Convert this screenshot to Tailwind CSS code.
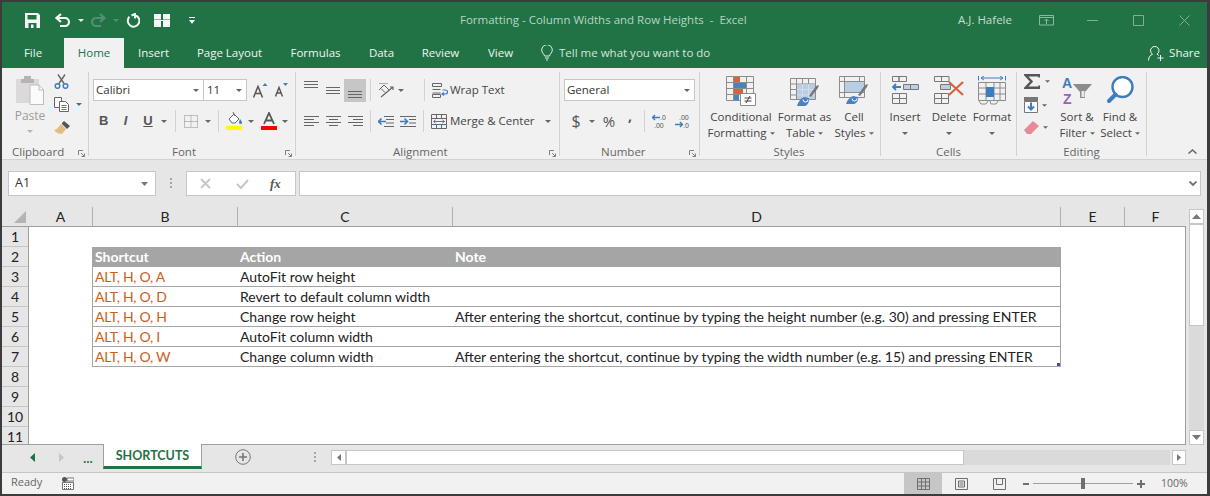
<html lang="en">
<head>
  <meta charset="utf-8"/>
  <title>Formatting - Column Widths and Row Heights - Excel</title>
  <script src="https://cdn.jsdelivr.net/npm/@tailwindcss/browser@4"></script>
</head>
<body class="bg-[#333333] overflow-hidden">
<div class="w-[1210px] h-[496px] border-l-2 border-t-2 border-r-3 border-b-2 border-[#3c3c3c] flex flex-col font-['Open_Sans',sans-serif] text-[11.5px] text-[#444444] overflow-hidden">

  <!-- Title bar -->
  <div class="h-[36px] bg-[#217346] flex items-center shrink-0">
    <div class="w-[458px] flex items-center">
      <svg class="ml-[23px]" width="15" height="15" viewBox="0 0 15 15"><path d="M0 0h13l2 2v13H0z" fill="#f4f8f5"/><path d="M2.500 2h9v4.500h-9z" fill="#217346"/><path d="M3.500 10h8v5h-8z" fill="#217346"/><path d="M6 11.500h2.500V15H6z" fill="#f4f8f5"/></svg>
      <svg class="ml-[15px]" width="15" height="14" viewBox="0 0 15 14"><path d="M6 1L1.500 5 6 9M2 5h8a3.800 3.800 0 0 1 0 8H5" fill="none" stroke="#f4f8f5" stroke-width="2.200"/></svg>
      <svg class="ml-[8px]" width="6" height="3" viewBox="0 0 6 3"><path d="M0 0h6L3 3z" fill="#e8f0eb"/></svg>
      <svg class="ml-[7px]" width="15" height="14" viewBox="0 0 15 14"><path d="M9 1l4.500 4L9 9M13 5H5a3.800 3.800 0 0 0 0 8h5" fill="none" stroke="#4f9170" stroke-width="2.200"/></svg>
      <svg class="ml-[7px]" width="6" height="3" viewBox="0 0 6 3"><path d="M0 0h6L3 3z" fill="#4f9170"/></svg>
      <svg class="ml-[7px]" width="14" height="15" viewBox="0 0 14 15"><path d="M5.500 2.500L9 1v4.500M9 2.200A5.800 5.800 0 1 1 3.400 3.800" fill="none" stroke="#f4f8f5" stroke-width="2"/></svg>
      <svg class="ml-[14px]" width="16" height="13" viewBox="0 0 16 13"><path d="M0 0h7v5.500H0zM9 0h7v5.500H9zM0 7h7v6H0zM9 7h7v6H9z" fill="#f4f8f5"/><path d="M0 6.500h16" stroke="#f4f8f5"/></svg>
      <svg class="ml-[19px]" width="6" height="7" viewBox="0 0 6 7"><path d="M0 0h6v1H0zM0 3h6L3 7z" fill="#f4f8f5"/></svg>
    </div>
    <span class="w-[498px] text-[#b7d3c3] whitespace-pre">Formatting - Column Widths and Row Heights  -  Excel</span>
    <span class="w-[81px] text-[#c6dccf]">A.J. Hafele</span>
    <svg width="15" height="11" viewBox="0 0 15 11"><path d="M.5.500h14v9.500H.500zM.5 2.500h14M7.500 9V4.500M5.500 6l2-2 2 2" fill="none" stroke="#8cb8a1"/></svg>
    <svg class="ml-[33px]" width="11" height="1" viewBox="0 0 11 1"><path d="M0 0h11v1H0z" fill="#7fb096"/></svg>
    <svg class="ml-[35px]" width="11" height="11" viewBox="0 0 11 11"><path d="M.5.500h10v10H.500z" fill="none" stroke="#7fb096"/></svg>
    <svg class="ml-[35px]" width="11" height="11" viewBox="0 0 11 11"><path d="M.5.500l10 10M10.500.500l-10 10" fill="none" stroke="#7fb096"/></svg>
  </div>

  <!-- Ribbon tabs -->
  <div class="h-[30px] bg-[#217346] flex text-[#eef5f1] shrink-0">
    <span class="w-[62px] flex items-center justify-center">File</span>
    <span class="w-[60px] flex items-center justify-center bg-[#f1f1f1] text-[#217346]">Home</span>
    <span class="w-[59px] flex items-center justify-center">Insert</span>
    <span class="w-[93px] flex items-center justify-center">Page Layout</span>
    <span class="w-[79px] flex items-center justify-center">Formulas</span>
    <span class="w-[53px] flex items-center justify-center">Data</span>
    <span class="w-[65px] flex items-center justify-center">Review</span>
    <span class="w-[55px] flex items-center justify-center">View</span>
    <span class="ml-[13px] flex items-center">
      <svg width="12" height="16" viewBox="0 0 12 16"><path d="M3.500 11C3 8.500.7 7.800.7 5a5.300 5.300 0 0 1 10.600 0c0 2.800-2.300 3.500-2.800 6zM4 13h4M5 15h2" fill="none" stroke="#e3eee8"/></svg>
      <span class="ml-[6px] text-[#d5e5dc]">Tell me what you want to do</span>
    </span>
    <span class="ml-auto mr-[7px] flex items-center">
      <svg width="16" height="16" viewBox="0 0 16 16"><path d="M.5 15.500c0-3.500 2-5.500 4-6.300a4.200 4.200 0 1 1 4.500 0c.7.300 1.300.7 1.800 1.200M9.500 13h6M12.500 10v6" fill="none" stroke="#f4f8f5"/></svg>
      <span class="ml-[5px]">Share</span>
    </span>
  </div>

  <!-- Ribbon -->
  <div class="h-[92px] bg-[#f1f1f1] border-b border-[#d2d2d2] flex pt-[4px] shrink-0">

    <!-- Clipboard -->
    <div class="w-[87px] h-[84px] border-r border-[#d2d2d2] flex flex-col">
      <div class="h-[74px] shrink-0 flex">
        <div class="ml-[9px] w-[38px] flex flex-col items-center pt-[4px] text-[#9c9c9c]">
          <svg width="28" height="29" viewBox="0 0 28 29"><path d="M0 3h23v24H0z" fill="#dbd9da"/><path d="M8 0h7v3h3v4H5V3h3z" fill="#b5b3b4"/><path d="M14 9h9l4.500 4.500V28.500H14z" fill="#fbfbfb" stroke="#bdbdbd"/><path d="M23 9v5h4.500" fill="none" stroke="#bdbdbd"/></svg>
          <span class="mt-[3px] h-[16px] leading-[16px] text-[12px]">Paste</span>
          <svg class="mt-[6px]" width="6" height="3" viewBox="0 0 6 3"><path d="M0 0h6L3 3z" fill="#b4b4b4"/></svg>
        </div>
        <div class="ml-[5px] flex flex-col pt-[2px]">
          <svg width="15" height="15" viewBox="0 0 15 15"><path d="M4 .5l6 9M11 .5l-6 9" stroke="#666666" stroke-width="1.400" fill="none"/><circle cx="3.500" cy="12" r="2.300" fill="none" stroke="#3f7cbf" stroke-width="1.500"/><circle cx="11.500" cy="12" r="2.300" fill="none" stroke="#3f7cbf" stroke-width="1.500"/></svg>
          <div class="mt-[8px] flex items-center">
            <svg width="16" height="15" viewBox="0 0 16 15"><path d="M.5.500h7v10h-7z" fill="#fff" stroke="#666666"/><path d="M5.500 4.500h6l3 3v7h-9z" fill="#fff" stroke="#666666"/><path d="M7.500 8.500h5M7.500 10.500h5M7.500 12.500h5" stroke="#3f7cbf"/></svg>
            <svg class="ml-[6px]" width="6" height="3" viewBox="0 0 6 3"><path d="M0 0h6L3 3z" fill="#666666"/></svg>
          </div>
          <svg class="mt-[9px]" width="16" height="14" viewBox="0 0 16 14"><path d="M7 3l5 5-4 5C6 13 2 12 0 9c2 0 4-2 7-6z" fill="#e2bd80"/><path d="M8 2l2-2 6 5-2 2-1 1-5-5z" fill="#555555"/></svg>
        </div>
      </div>
      <div class="h-[12px] shrink-0 leading-[12px] flex text-[#666666]"><span class="ml-[10px]">Clipboard</span><svg class="ml-auto mr-[3px] mt-[4px]" width="7" height="7" viewBox="0 0 7 7"><path d="M.5 5V.5H5M3 3l3.500 3.500M6.500 3.500v3h-3" fill="none" stroke="#808080"/></svg></div>
    </div>

    <!-- Font -->
    <div class="w-[207px] h-[84px] border-r border-[#d2d2d2] flex flex-col">
      <div class="h-[74px] shrink-0 pt-[7px]">
        <div class="h-[22px] flex items-center pl-[4px]">
          <div class="w-[111px] h-[22px] bg-white border border-[#c6c6c6] flex items-center pl-[2px] pr-[4px] text-[#333333]">Calibri<svg class="ml-auto" width="6" height="3" viewBox="0 0 6 3"><path d="M0 0h6L3 3z" fill="#666666"/></svg></div>
          <div class="w-[43px] h-[22px] bg-white border border-[#c6c6c6] border-l-0 flex items-center pl-[3px] pr-[4px] text-[#333333]">11<svg class="ml-auto" width="6" height="3" viewBox="0 0 6 3"><path d="M0 0h6L3 3z" fill="#666666"/></svg></div>
          <svg class="ml-[6px]" width="15" height="15" viewBox="0 0 15 15"><path d="M.5 14.500L5 3.500l4.500 11M2.500 10.500h5" fill="none" stroke="#555555" stroke-width="1.500"/><path d="M9.500 3l2.500-3 2.500 3z" fill="#3f7cbf"/></svg>
          <svg class="ml-[7px]" width="13" height="14" viewBox="0 0 13 14"><path d="M.5 13.500L4 4.500l3.500 9M2 10h4" fill="none" stroke="#555555" stroke-width="1.400"/><path d="M8 0h5l-2.500 3z" fill="#3f7cbf"/></svg>
        </div>
        <div class="h-[22px] mt-[9px] flex items-center pl-[10px] text-[#555555]">
          <span class="w-[9px] text-[13px] font-bold font-['Liberation_Sans',sans-serif] text-center">B</span>
          <span class="ml-[13px] w-[9px] text-[13px] italic font-bold font-['Liberation_Sans',sans-serif] text-center">I</span>
          <span class="ml-[13px] w-[10px] text-[13px] font-bold underline font-['Liberation_Sans',sans-serif] text-center">U</span>
          <svg class="ml-[8px]" width="6" height="3" viewBox="0 0 6 3"><path d="M0 0h6L3 3z" fill="#666666"/></svg>
          <div class="ml-[8px] w-px h-[22px] bg-[#d2d2d2]"></div>
          <svg class="ml-[8px]" width="14" height="13" viewBox="0 0 14 13"><path d="M.5.500h13v12H.500zM7 .5v12M.5 6.500h13" fill="none" stroke="#8a8a8a" stroke-dasharray="1 1"/></svg>
          <svg class="ml-[7px]" width="6" height="3" viewBox="0 0 6 3"><path d="M0 0h6L3 3z" fill="#666666"/></svg>
          <div class="ml-[7px] w-px h-[22px] bg-[#d2d2d2]"></div>
          <svg class="ml-[7px]" width="17" height="18" viewBox="0 0 17 18"><path d="M3 7l5-5 5 5-4 4H6z" fill="#fff" stroke="#666666"/><path d="M7 0l2 4" stroke="#666666"/><path d="M14 7c1 1.500 2 2.500 2 3.500a1.500 1.500 0 0 1-3 0c0-1 .5-2 1-3.500z" fill="#3f7cbf"/><path d="M0 14h16v4H0z" fill="#ffff00"/></svg>
          <svg class="ml-[5px]" width="6" height="3" viewBox="0 0 6 3"><path d="M0 0h6L3 3z" fill="#666666"/></svg>
          <svg class="ml-[7px]" width="16" height="18" viewBox="0 0 16 18"><path d="M3 12L8 1l5 11M5 8.500h6" fill="none" stroke="#555555" stroke-width="1.800"/><path d="M0 14h16v4H0z" fill="#ff0000"/></svg>
          <svg class="ml-[5px]" width="6" height="3" viewBox="0 0 6 3"><path d="M0 0h6L3 3z" fill="#666666"/></svg>
        </div>
      </div>
      <div class="h-[12px] shrink-0 leading-[12px] flex text-[#666666]"><span class="ml-[83px]">Font</span><svg class="ml-auto mr-[3px] mt-[4px]" width="7" height="7" viewBox="0 0 7 7"><path d="M.5 5V.5H5M3 3l3.500 3.500M6.500 3.500v3h-3" fill="none" stroke="#808080"/></svg></div>
    </div>

    <!-- Alignment -->
    <div class="w-[264px] h-[84px] border-r border-[#d2d2d2] flex flex-col">
      <div class="h-[74px] shrink-0 pt-[7px]">
        <div class="h-[22px] flex items-center pl-[8px]">
          <svg class="self-start mt-[2px]" width="14" height="8" viewBox="0 0 14 8"><path d="M0 .5h14M0 3.500h14M0 6.500h14" stroke="#666666"/></svg>
          <svg class="ml-[8px] mt-[2px]" width="14" height="8" viewBox="0 0 14 8"><path d="M0 .5h14M0 3.500h14M0 6.500h14" stroke="#666666"/></svg>
          <div class="ml-[4px] w-[22px] h-[23px] bg-[#c6c6c6] flex items-end justify-center pb-[3px]"><svg width="14" height="8" viewBox="0 0 14 8"><path d="M0 .5h14M0 3.500h14M0 6.500h14" stroke="#666666"/></svg></div>
          <div class="ml-[4px] w-px h-[22px] bg-[#d2d2d2]"></div>
          <svg class="ml-[7px]" width="16" height="15" viewBox="0 0 16 15"><path d="M1 7l5-5 5 5M3 5.500l4 4M10 0l-9 0" fill="none" stroke="#666666"/><path d="M3 14L15 4M12 4h3v3" fill="none" stroke="#666666" stroke-width="1.200"/></svg>
          <svg class="ml-[4px]" width="6" height="3" viewBox="0 0 6 3"><path d="M0 0h6L3 3z" fill="#666666"/></svg>
          <div class="ml-[20px] w-px h-[22px] bg-[#d2d2d2]"></div>
          <svg class="ml-[7px]" width="16" height="15" viewBox="0 0 16 15"><path d="M.5.500h9v3h-9zM.5 6.500h8M.5 10h8M.5 11.500h8v3h-8z" fill="none" stroke="#666666"/><path d="M10.500 7h3a2 2 0 0 1 0 4h-3M12 9.500L10 11l2 1.500" fill="none" stroke="#3f7cbf" stroke-width="1.200"/></svg>
          <span class="ml-[2px] text-[#444444]">Wrap Text</span>
        </div>
        <div class="h-[22px] mt-[9px] flex items-center pl-[8px]">
          <svg width="15" height="10" viewBox="0 0 15 10"><path d="M0 .5h15M0 3.500h10M0 6.500h15M0 9.500h10" stroke="#666666"/></svg>
          <svg class="ml-[7px]" width="15" height="10" viewBox="0 0 15 10"><path d="M0 .5h15M3 3.500h9M0 6.500h15M3 9.500h9" stroke="#666666"/></svg>
          <svg class="ml-[7px]" width="15" height="10" viewBox="0 0 15 10"><path d="M0 .5h15M5 3.500h10M0 6.500h15M5 9.500h10" stroke="#666666"/></svg>
          <div class="ml-[7px] w-px h-[22px] bg-[#d2d2d2]"></div>
          <svg class="ml-[7px]" width="16" height="11" viewBox="0 0 16 11"><path d="M6 .5h10M6 10.500h10M8 3.500h8M8 7h8" stroke="#666666"/><path d="M8 5.500H1M3.500 2.500l-3 3 3 3" fill="none" stroke="#3f7cbf" stroke-width="1.600"/></svg>
          <svg class="ml-[6px]" width="16" height="11" viewBox="0 0 16 11"><path d="M0 .5h16M9 3.500h7M9 7h7M0 10.500h16" stroke="#666666"/><path d="M0 5.500h7M4.500 2.500l3 3-3 3" fill="none" stroke="#3f7cbf" stroke-width="1.600"/></svg>
          <div class="ml-[7px] w-px h-[22px] bg-[#d2d2d2]"></div>
          <svg class="ml-[7px]" width="16" height="15" viewBox="0 0 16 15"><path d="M.5.500h15v14H.500zM.5 4.500h15M.5 10.500h15M5.500.5v4M10.500.5v4M5.500 10.500v4M10.500 10.500v4" fill="none" stroke="#666666"/><path d="M2.500 7.500h11M4.500 6l-2 1.500 2 1.500M11.500 6l2 1.500-2 1.500" fill="none" stroke="#3f7cbf"/></svg>
          <span class="ml-[3px]">Merge &amp; Center</span>
          <svg class="ml-[10px]" width="6" height="3" viewBox="0 0 6 3"><path d="M0 0h6L3 3z" fill="#666666"/></svg>
        </div>
      </div>
      <div class="h-[12px] shrink-0 leading-[12px] flex text-[#666666]"><span class="ml-[97px]">Alignment</span><svg class="ml-auto mr-[3px] mt-[4px]" width="7" height="7" viewBox="0 0 7 7"><path d="M.5 5V.5H5M3 3l3.500 3.500M6.500 3.500v3h-3" fill="none" stroke="#808080"/></svg></div>
    </div>

    <!-- Number -->
    <div class="w-[140px] h-[84px] border-r border-[#d2d2d2] flex flex-col">
      <div class="h-[74px] shrink-0 pt-[7px]">
        <div class="h-[22px] flex items-center pl-[4px]">
          <div class="w-[131px] h-[22px] bg-white border border-[#c6c6c6] flex items-center pl-[2px] pr-[4px] text-[#333333]">General<svg class="ml-auto" width="6" height="3" viewBox="0 0 6 3"><path d="M0 0h6L3 3z" fill="#666666"/></svg></div>
        </div>
        <div class="h-[22px] mt-[9px] flex items-center pl-[11px] text-[#555555]">
          <span class="w-[10px] text-[16px] text-center">$</span>
          <svg class="ml-[8px]" width="6" height="3" viewBox="0 0 6 3"><path d="M0 0h6L3 3z" fill="#666666"/></svg>
          <span class="ml-[7px] w-[14px] text-[15px] text-center">%</span>
          <span class="ml-[10px] w-[8px] text-[14px] font-bold text-center leading-none -mt-[10px]">,</span>
          <div class="ml-[10px] w-px h-[22px] bg-[#d2d2d2]"></div>
          <svg class="ml-[7px]" width="15" height="14" viewBox="0 0 15 14"><path d="M8 3.500H.5M3 1L.5 3.500 3 6" fill="none" stroke="#3f7cbf" stroke-width="1.400"/><text x="8" y="6" font-size="7" fill="#555555" font-family="Liberation Sans">.0</text><text x="2" y="13.500" font-size="7" fill="#555555" font-family="Liberation Sans">.00</text></svg>
          <svg class="ml-[8px]" width="15" height="14" viewBox="0 0 15 14"><text x="4" y="6" font-size="7" fill="#555555" font-family="Liberation Sans">.00</text><path d="M0 10.500h7.500M5 8l2.500 2.500L5 13" fill="none" stroke="#3f7cbf" stroke-width="1.400"/><text x="8" y="13.500" font-size="7" fill="#555555" font-family="Liberation Sans">.0</text></svg>
        </div>
      </div>
      <div class="h-[12px] shrink-0 leading-[12px] flex text-[#666666]"><span class="ml-[41px]">Number</span><svg class="ml-auto mr-[3px] mt-[4px]" width="7" height="7" viewBox="0 0 7 7"><path d="M.5 5V.5H5M3 3l3.500 3.500M6.500 3.500v3h-3" fill="none" stroke="#808080"/></svg></div>
    </div>

    <!-- Styles -->
    <div class="w-[181px] h-[84px] border-r border-[#d2d2d2] flex flex-col">
      <div class="h-[74px] shrink-0 flex pt-[4px] leading-[16px] text-center">
        <div class="ml-[5px] w-[72px] flex flex-col items-center">
          <svg width="30" height="30" viewBox="0 0 30 30"><path d="M.5.500h27v24H.500zM.5 6.500h27M.5 12.500h27M.5 18.500h27M7.500.5v24M20.500.5v24" fill="none" stroke="#8c8c8c"/><path d="M8 1h6v5H8zM8 13h9v5H8z" fill="#d8623d"/><path d="M8 7h12v5H8zM8 19h5v5H8z" fill="#4a82bd"/><path d="M14.500 17.500h15v12h-15z" fill="#fff" stroke="#8c8c8c"/><path d="M18.500 22h7M18.500 25h7M24 20l-4 7" stroke="#444444" fill="none"/></svg>
          <span class="mt-[3px] whitespace-nowrap">Conditional</span>
          <span class="whitespace-nowrap flex items-center">Formatting<svg class="ml-[3px]" width="5" height="3" viewBox="0 0 6 3"><path d="M0 0h6L3 3z" fill="#666666"/></svg></span>
        </div>
        <div class="w-[55px] flex flex-col items-center">
          <svg width="30" height="30" viewBox="0 0 30 30"><path d="M.5 2.500h25v21H.500zM.5 8h25M.5 13.500h25M.5 19h25M6.500 2.500v21M12.500 2.500v21M18.500 2.500v21" fill="none" stroke="#8c8c8c"/><path d="M7 8.500h18V23H7z" fill="#b9cde4"/><path d="M7 13.500h18M7 19h18M12.500 8v15M18.500 8v15" stroke="#d3deeb"/><path d="M19 20l7-10 3-1-1 3-7 9z" fill="#777777"/><path d="M7 30c1-4 4-8 7-9l5 1c1 3-2 8-4 8z" fill="#4a82bd"/><path d="M13 23.500a2.500 2.500 0 1 0 5 0" fill="none" stroke="#fff"/></svg>
          <span class="mt-[3px] whitespace-nowrap">Format as</span>
          <span class="whitespace-nowrap flex items-center">Table<svg class="ml-[3px]" width="5" height="3" viewBox="0 0 6 3"><path d="M0 0h6L3 3z" fill="#666666"/></svg></span>
        </div>
        <div class="w-[44px] flex flex-col items-center">
          <svg width="30" height="30" viewBox="0 0 30 30"><path d="M.5.500h25v21H.500zM.5 5.500h25M.5 16.500h25M5.500.5v21M20.500.5v16" fill="none" stroke="#8c8c8c"/><path d="M6 6h19v10H6z" fill="#b9cde4"/><path d="M19 19l7-10 3-1-1 3-7 9z" fill="#777777"/><path d="M7 28c1-4 4-7 7-8l5 1c1 3-2 7-4 7z" fill="#4a82bd"/><path d="M13 22.500a2.500 2.500 0 1 0 5 0" fill="none" stroke="#fff"/></svg>
          <span class="mt-[3px]">Cell</span>
          <span class="whitespace-nowrap flex items-center">Styles<svg class="ml-[3px]" width="5" height="3" viewBox="0 0 6 3"><path d="M0 0h6L3 3z" fill="#666666"/></svg></span>
        </div>
      </div>
      <div class="h-[12px] shrink-0 leading-[12px] text-center text-[#666666] pr-[2px]">Styles</div>
    </div>

    <!-- Cells -->
    <div class="w-[136px] h-[84px] border-r border-[#d2d2d2] flex flex-col">
      <div class="h-[74px] shrink-0 flex pt-[4px] leading-[16px] text-center">
        <div class="ml-[5px] w-[38px] flex flex-col items-center">
          <svg width="27" height="30" viewBox="0 0 27 30"><path d="M.5.500h6.500v5H.500zM7 .5h7.500v5H7zM.5 17.500h14v10H.500zM7.500 17.500v10M.5 22.500h14" fill="none" stroke="#777777"/><path d="M11.500 8.500h7v5h-7zM18.500 8.500h8v5h-8z" fill="#bad0e6" stroke="#777777"/><path d="M9 11H1M4 8l-3 3 3 3" fill="none" stroke="#3f7cbf" stroke-width="1.800"/></svg>
          <span class="mt-[3px]">Insert</span>
          <svg class="mt-[7px]" width="6" height="3" viewBox="0 0 6 3"><path d="M0 0h6L3 3z" fill="#666666"/></svg>
        </div>
        <div class="ml-[5px] w-[40px] flex flex-col items-center">
          <svg width="31" height="30" viewBox="0 0 31 30"><path d="M.5.500h7v5h-7zM7.500.5h7.500v5H7.500zM.5 17.500h14v10H.500zM7.500 17.500v10M.5 22.500h14" fill="none" stroke="#777777"/><path d="M6.500 8.500h10v5h-10z" fill="#bad0e6" stroke="#777777"/><path d="M15 6l14 13M29 6L15 19" stroke="#d8623d" stroke-width="2.200"/></svg>
          <span class="mt-[3px]">Delete</span>
          <svg class="mt-[7px]" width="6" height="3" viewBox="0 0 6 3"><path d="M0 0h6L3 3z" fill="#666666"/></svg>
        </div>
        <div class="ml-[1px] w-[44px] flex flex-col items-center">
          <svg width="28" height="30" viewBox="0 0 28 30"><path d="M.5-.500v5M27.500-.500v5M3 2h22M6 0L3 2l3 2M22 0l3 2-3 2" fill="none" stroke="#3f7cbf"/><path d="M.5 6.500h27v18H.500zM.5 12h27M.5 18h27M8 6.500v18M16 6.500v18M22 6.500v18" fill="none" stroke="#8c8c8c"/><path d="M8 11h8v10H8z" fill="#3f7cbf"/><path d="M1 25l2 3h5l2-3M12 25l1 3h5l2-3" fill="none" stroke="#8c8c8c"/></svg>
          <span class="mt-[3px]">Format</span>
          <svg class="mt-[7px]" width="6" height="3" viewBox="0 0 6 3"><path d="M0 0h6L3 3z" fill="#666666"/></svg>
        </div>
      </div>
      <div class="h-[12px] shrink-0 leading-[12px] text-center text-[#666666]">Cells</div>
    </div>

    <!-- Editing -->
    <div class="w-[130px] h-[84px] border-r border-[#d2d2d2] flex flex-col">
      <div class="h-[74px] shrink-0 flex">
        <div class="ml-[7px] flex flex-col pt-[2px]">
          <div class="flex items-center">
            <svg width="16" height="15" viewBox="0 0 16 15"><path d="M15.500 3.500V1.200H1.500l6 6.300-6 6.300h14v-2.300" fill="none" stroke="#555555" stroke-width="2.400"/></svg>
            <svg class="ml-[5px]" width="5" height="3" viewBox="0 0 6 3"><path d="M0 0h6L3 3z" fill="#666666"/></svg>
          </div>
          <div class="mt-[8px] flex items-center">
            <svg width="14" height="16" viewBox="0 0 14 16"><path d="M0 0h14v4H0z" fill="#777777"/><path d="M.5 4.500h13v11H.500z" fill="#fff" stroke="#777777"/><path d="M7 5.500v7M4 9.500l3 3 3-3" fill="none" stroke="#3f7cbf" stroke-width="2"/></svg>
            <svg class="ml-[4px]" width="5" height="3" viewBox="0 0 6 3"><path d="M0 0h6L3 3z" fill="#666666"/></svg>
          </div>
          <div class="mt-[8px] flex items-center">
            <svg width="15" height="13" viewBox="0 0 15 13"><path d="M0 9l9-9 6 5-8 8H3z" fill="#e8899a"/></svg>
            <svg class="ml-[4px]" width="5" height="3" viewBox="0 0 6 3"><path d="M0 0h6L3 3z" fill="#666666"/></svg>
          </div>
        </div>
        <div class="ml-[7px] w-[40px] flex flex-col items-center pt-[4px] leading-[16px] text-center">
          <svg width="30" height="30" viewBox="0 0 30 30"><text x="0" y="12" font-size="14" font-weight="bold" fill="#3f7cbf" font-family="Liberation Sans">A</text><text x="1" y="28" font-size="14" font-weight="bold" fill="#9a63b5" font-family="Liberation Sans">Z</text><path d="M11 8h19l-7 8v6h-5v-6z" fill="#8c8c8c"/><path d="M19.500 15h3v6h-3z" fill="#e8e8e8"/></svg>
          <span class="mt-[3px] whitespace-nowrap">Sort &amp;</span>
          <span class="whitespace-nowrap flex items-center">Filter<svg class="ml-[3px]" width="5" height="3" viewBox="0 0 6 3"><path d="M0 0h6L3 3z" fill="#666666"/></svg></span>
        </div>
        <div class="ml-[3px] w-[40px] flex flex-col items-center pt-[4px] leading-[16px] text-center">
          <svg width="28" height="30" viewBox="0 0 28 30"><circle cx="16.500" cy="11" r="10" fill="#fff" stroke="#3f7cbf" stroke-width="2.400"/><path d="M9.500 18.500L3 25" stroke="#3f7cbf" stroke-width="4" stroke-linecap="round"/></svg>
          <span class="mt-[3px] whitespace-nowrap">Find &amp;</span>
          <span class="whitespace-nowrap flex items-center">Select<svg class="ml-[3px]" width="5" height="3" viewBox="0 0 6 3"><path d="M0 0h6L3 3z" fill="#666666"/></svg></span>
        </div>
      </div>
      <div class="h-[12px] shrink-0 leading-[12px] text-center text-[#666666]">Editing</div>
    </div>

    <div class="flex-1 flex items-end justify-end pr-[10px] pb-[5px]">
      <svg width="9" height="5" viewBox="0 0 9 5"><path d="M.5 4.500l4-3.500 4 3.500" fill="none" stroke="#666666" stroke-width="1.500"/></svg>
    </div>
  </div>

  <!-- Formula bar -->
  <div class="h-[47px] bg-[#e6e6e6] flex items-center pl-[6px] pr-[6px] shrink-0">
    <div class="w-[148px] h-[25px] bg-white border border-[#c6c6c6] flex items-center pl-[6px] pr-[7px] text-[12.500px] text-[#333333]">A1<svg class="ml-auto" width="7" height="4" viewBox="0 0 7 4"><path d="M0 0h7L3.500 4z" fill="#777777"/></svg></div>
    <svg class="ml-[14px]" width="3" height="11" viewBox="0 0 3 11"><path d="M0 0h2v2H0zM0 4h2v2H0zM0 8h2v2H0z" fill="#a6a6a6"/></svg>
    <div class="ml-[13px] w-[110px] h-[25px] bg-white border border-[#c6c6c6] flex items-center pl-[13px]">
      <svg width="11" height="11" viewBox="0 0 11 11"><path d="M1 1l9 9M10 1l-9 9" stroke="#c6c6c6" stroke-width="1.800"/></svg>
      <svg class="ml-[25px]" width="13" height="10" viewBox="0 0 13 10"><path d="M1 5l4 4 7-8" fill="none" stroke="#c6c6c6" stroke-width="2"/></svg>
      <span class="ml-[21px] italic font-bold text-[13px] text-[#555555] font-['Liberation_Serif',serif]">fx</span>
    </div>
    <div class="ml-[3px] flex-1 h-[25px] bg-white border border-[#c6c6c6] flex items-center justify-end pr-[3px]">
      <svg width="8" height="6" viewBox="0 0 8 6"><path d="M.5.500L4 4 7.500.5" fill="none" stroke="#6e6e6e" stroke-width="1.800"/></svg>
    </div>
  </div>

  <!-- Sheet -->
  <div class="h-[238px] flex bg-[#e6e6e6] shrink-0 font-['Lato',sans-serif] text-[14px] text-[#222222]">
    <div class="w-[1184px] flex flex-col">
      <div class="h-[20px] flex border-b border-[#9f9f9f] shrink-0 leading-[20px] text-center">
        <div class="w-[27px] flex items-end justify-end pr-[3px] pb-[3px]"><svg width="12" height="12" viewBox="0 0 12 12"><path d="M12 0v12H0z" fill="#b4b4b4"/></svg></div>
        <div class="w-[64px] border-r border-[#b0b0b0]">A</div>
        <div class="w-[145px] border-r border-[#b0b0b0]">B</div>
        <div class="w-[215px] border-r border-[#b0b0b0]">C</div>
        <div class="w-[608px] border-r border-[#b0b0b0]">D</div>
        <div class="w-[64px] border-r border-[#b0b0b0]">E</div>
        <div class="w-[61px]">F</div>
      </div>
      <div class="flex-1 flex overflow-hidden border-b border-[#9f9f9f]">
        <div class="w-[27px] border-r border-[#9f9f9f] shrink-0 text-center leading-[20px]">
          <div class="h-[20px] border-b border-[#c6c6c6]">1</div>
          <div class="h-[20px] border-b border-[#c6c6c6]">2</div>
          <div class="h-[20px] border-b border-[#c6c6c6]">3</div>
          <div class="h-[20px] border-b border-[#c6c6c6]">4</div>
          <div class="h-[20px] border-b border-[#c6c6c6]">5</div>
          <div class="h-[20px] border-b border-[#c6c6c6]">6</div>
          <div class="h-[20px] border-b border-[#c6c6c6]">7</div>
          <div class="h-[20px] border-b border-[#c6c6c6]">8</div>
          <div class="h-[20px] border-b border-[#c6c6c6]">9</div>
          <div class="h-[20px] border-b border-[#c6c6c6]">10</div>
          <div class="h-[20px]">11</div>
        </div>
        <div class="flex-1 bg-white border-r border-[#9f9f9f] pl-[63px] pt-[20px]">
          <div class="w-[969px] relative border-x border-b border-[#a5a5a5] leading-[19px] whitespace-nowrap">
            <div class="h-[20px] bg-[#a5a5a5] text-white font-bold grid grid-cols-[145px_215px_607px]"><span class="pl-[2px]">Shortcut</span><span class="pl-[2px]">Action</span><span class="pl-[2px]">Note</span></div>
            <div class="h-[20px] border-b border-[#a5a5a5] grid grid-cols-[145px_215px_607px]"><span class="pl-[2px] text-[#c9601c] tracking-[-0.3px]">ALT, H, O, A</span><span class="pl-[2px]">AutoFit row height</span><span></span></div>
            <div class="h-[20px] border-b border-[#a5a5a5] grid grid-cols-[145px_215px_607px]"><span class="pl-[2px] text-[#c9601c] tracking-[-0.3px]">ALT, H, O, D</span><span class="pl-[2px]">Revert to default column width</span><span></span></div>
            <div class="h-[20px] border-b border-[#a5a5a5] grid grid-cols-[145px_215px_607px]"><span class="pl-[2px] text-[#c9601c] tracking-[-0.3px]">ALT, H, O, H</span><span class="pl-[2px]">Change row height</span><span class="pl-[2px]">After entering the shortcut, continue by typing the height number (e.g. 30) and pressing ENTER</span></div>
            <div class="h-[20px] border-b border-[#a5a5a5] grid grid-cols-[145px_215px_607px]"><span class="pl-[2px] text-[#c9601c] tracking-[-0.3px]">ALT, H, O, I</span><span class="pl-[2px]">AutoFit column width</span><span></span></div>
            <div class="h-[19px] grid grid-cols-[145px_215px_607px]"><span class="pl-[2px] text-[#c9601c] tracking-[-0.3px]">ALT, H, O, W</span><span class="pl-[2px]">Change column width</span><span class="pl-[2px]">After entering the shortcut, continue by typing the width number (e.g. 15) and pressing ENTER</span></div>
            <div class="absolute right-0 bottom-0 w-[3px] h-[3px] bg-[#3f51a8]"></div>
          </div>
        </div>
      </div>
    </div>
    <!-- Vertical scrollbar -->
    <div class="w-[21px] pl-[3px] pr-[3px] pt-[2px] flex flex-col">
      <div class="h-[15px] bg-white border border-[#c6c6c6] flex items-center justify-center shrink-0"><svg width="9" height="5" viewBox="0 0 9 5"><path d="M4.500 0L9 5H0z" fill="#777777"/></svg></div>
      <div class="h-[102px] bg-white border border-[#c6c6c6] shrink-0"></div>
      <div class="flex-1 bg-[#dadada]"></div>
      <div class="h-[15px] bg-white border border-[#c6c6c6] flex items-center justify-center shrink-0"><svg width="9" height="5" viewBox="0 0 9 5"><path d="M0 0h9L4.500 5z" fill="#777777"/></svg></div>
    </div>
  </div>

  <!-- Sheet tabs -->
  <div class="h-[27px] bg-[#e6e6e6] flex items-start shrink-0">
    <div class="h-[24px] flex items-center w-[101px] text-[#217346]">
      <svg class="ml-[28px]" width="5" height="9" viewBox="0 0 5 9"><path d="M5 0v9L0 4.500z" fill="#217346"/></svg>
      <svg class="ml-[24px]" width="5" height="9" viewBox="0 0 5 9"><path d="M0 0v9l5-4.500z" fill="#c6c6c6"/></svg>
      <span class="ml-[19px] font-bold mt-[4px]">...</span>
    </div>
    <div class="w-[99px] h-[25px] -mt-px pt-[3px] bg-white border-x border-[#9f9f9f] border-b-3 border-b-[#217346] flex items-center justify-center text-[#217346] font-bold text-[12.500px] font-['Lato',sans-serif]">SHORTCUTS</div>
    <div class="h-[24px] flex items-center">
      <svg class="ml-[33px]" width="16" height="16" viewBox="0 0 16 16"><circle cx="8" cy="8" r="7.300" fill="none" stroke="#777777"/><path d="M8 4v8M4 8h8" stroke="#777777" stroke-width="1.600"/></svg>
      <svg class="ml-[63px]" width="3" height="11" viewBox="0 0 3 11"><path d="M0 0h2v2H0zM0 4h2v2H0zM0 8h2v2H0z" fill="#a6a6a6"/></svg>
      <div class="ml-[14px] w-[15px] h-[15px] bg-white border border-[#c6c6c6] flex items-center justify-center"><svg width="4" height="7" viewBox="0 0 4 7"><path d="M4 0v7L0 3.500z" fill="#777777"/></svg></div>
      <div class="w-[618px] h-[15px] bg-white border border-[#c6c6c6]"></div>
      <div class="w-[206px] h-[15px] bg-[#dadada]"></div>
      <div class="ml-[2px] w-[14px] h-[15px] bg-white border border-[#c6c6c6] flex items-center justify-center"><svg width="4" height="7" viewBox="0 0 4 7"><path d="M0 0v7l4-3.500z" fill="#777777"/></svg></div>
    </div>
  </div>

  <!-- Status bar -->
  <div class="flex-1 bg-[#f1f1f1] border-t border-[#c6c6c6] flex items-center text-[#666666] text-[11px]">
    <span class="ml-[9px] w-[51px] pb-[2px]">Ready</span>
    <svg width="12" height="13" viewBox="0 0 12 13"><circle cx="2.500" cy="2.500" r="2.500" fill="#555555"/><path d="M5 1h7v3H5zM.5 5.500h11v7H.500z" fill="#fff" stroke="#555555" stroke-width=".8"/><path d="M2 7.500h8M2 9.500h8M2 11.500h8" stroke="#555555" stroke-dasharray="1 1"/></svg>
    <div class="ml-auto flex items-center h-full">
      <div class="w-[38px] h-full bg-[#c6c6c6] flex items-center justify-center"><svg width="13" height="12" viewBox="0 0 13 12"><path d="M.5.500h12v11H.500zM4.500.5v11M8.500.5v11M.5 4h12M.5 8h12" fill="none" stroke="#6e6e6e"/></svg></div>
      <svg class="ml-[13px]" width="13" height="12" viewBox="0 0 13 12"><path d="M.5.500h12v11H.500zM3.500 3h6v6h-6zM4.500 5h4M4.500 7h4" fill="none" stroke="#6e6e6e"/></svg>
      <svg class="ml-[25px]" width="13" height="12" viewBox="0 0 13 12"><path d="M.5 11.500V.5h12v11zM3.500.5v6h6v-6" fill="none" stroke="#6e6e6e"/></svg>
      <svg class="ml-[17px]" width="6" height="2" viewBox="0 0 6 2"><path d="M0 0h6v2H0z" fill="#6e6e6e"/></svg>
      <div class="ml-[4px] w-[100px] h-px bg-[#9f9f9f] relative"><div class="absolute left-[48px] -top-[5px] w-[4px] h-[11px] bg-[#6e6e6e]"></div></div>
      <svg class="ml-[4px]" width="8" height="8" viewBox="0 0 8 8"><path d="M3 0h2v3h3v2H5v3H3V5H0V3h3z" fill="#6e6e6e"/></svg>
      <span class="ml-[16px] w-[46px] text-[10.500px]">100%</span>
    </div>
  </div>
</div>
</body>
</html>
